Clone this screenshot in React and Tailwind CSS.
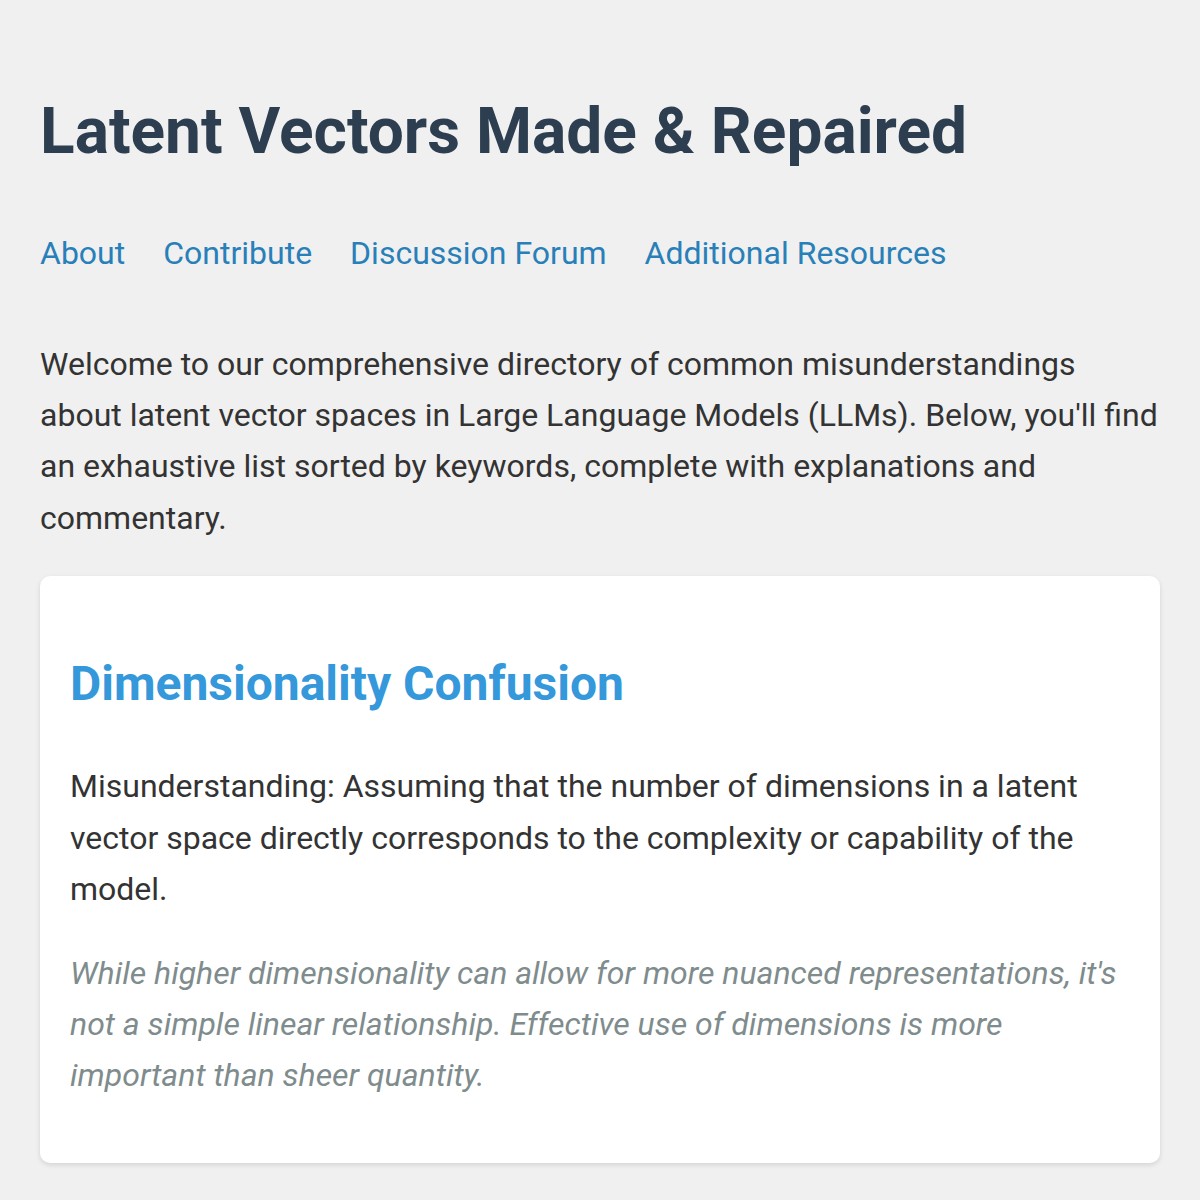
export default function App() {
  const links = ["About", "Contribute", "Discussion Forum", "Additional Resources"];
  return (
    <div className="min-h-screen bg-[#f0f0f0] px-[40px] pt-[94px] pb-[40px] font-['Roboto',sans-serif] text-[#333]">
      <h1 className="text-[64px] leading-[1.2] font-bold text-[#2c3e50]">
        Latent Vectors Made &amp; Repaired
      </h1>

      <nav className="mt-[57px] flex gap-[38px] text-[32px] leading-[1.6]">
        {links.map((l) => (
          <a key={l} href="#" className="text-[#2980b9]">
            {l}
          </a>
        ))}
      </nav>

      <p className="mt-[60px] text-[32px] leading-[1.6]">
        Welcome to our comprehensive directory of common misunderstandings about latent vector
        spaces in Large Language Models (LLMs). Below, you'll find an exhaustive list sorted by
        keywords, complete with explanations and commentary.
      </p>

      {/* Entry card */}
      <div className="mt-[32px] rounded-[10px] bg-white px-[30px] pt-[79px] pb-[62px] shadow-[0_2px_5px_rgba(0,0,0,0.12)]">
        <h2 className="text-[48px] leading-[1.2] font-bold text-[#3498db]">
          Dimensionality Confusion
        </h2>
        <p className="mt-[49px] text-[32px] leading-[1.6]">
          Misunderstanding: Assuming that the number of dimensions in a latent vector space
          directly corresponds to the complexity or capability of the model.
        </p>
        <p className="mt-[33px] text-[32px] leading-[1.6] italic text-[#7f8c8d]">
          While higher dimensionality can allow for more nuanced representations, it's not a
          simple linear relationship. Effective use of dimensions is more important than sheer
          quantity.
        </p>
      </div>
    </div>
  );
}
